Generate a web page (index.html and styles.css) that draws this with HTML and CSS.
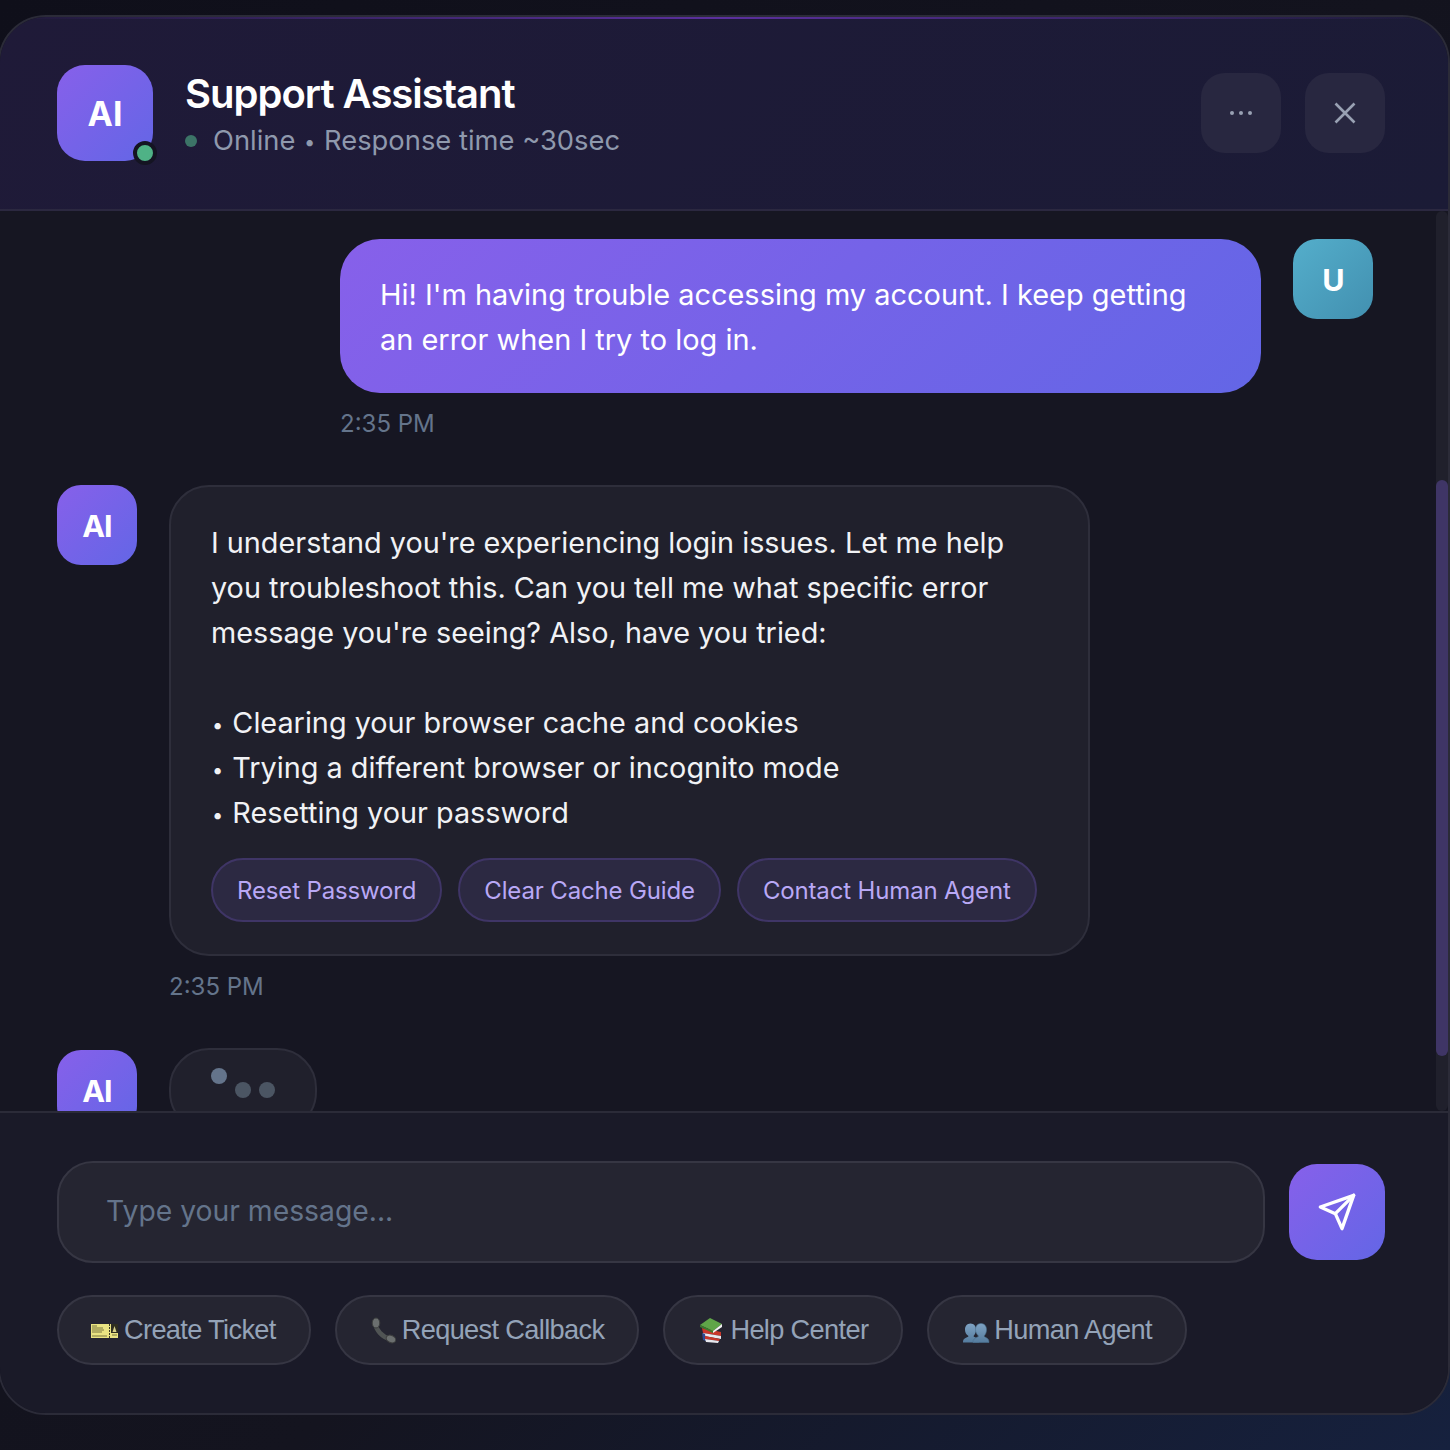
FILE: index.html
```html
<!DOCTYPE html>
<html lang="en">
<head>
<meta charset="utf-8">
<title>Support Assistant</title>
<link rel="stylesheet" href="styles.css">
</head>
<body>
<main class="window">
  <header class="header">
    <div class="header-main">
      <div class="avatar-large">AI<span class="online-badge"></span></div>
      <div class="agent-info">
        <h1 class="agent-name">Support Assistant</h1>
        <div class="agent-status"><span class="status-dot"></span><span>Online <span class="bullet">•</span> Response time ~30sec</span></div>
      </div>
    </div>
    <div class="header-actions">
      <button class="icon-btn" aria-label="More"><svg width="40" height="40" viewBox="0 0 40 40"><circle cx="11" cy="20" r="2"/><circle cx="20" cy="20" r="2"/><circle cx="29" cy="20" r="2"/></svg></button>
      <button class="icon-btn" aria-label="Close"><svg class="stroke" width="40" height="40" viewBox="0 0 40 40"><path d="M10.500 10.500l19 19M29.500 10.500l-19 19"/></svg></button>
    </div>
  </header>
  <section class="messages">
    <div class="msg msg-user">
      <div class="msg-body">
        <div class="bubble bubble-user">Hi! I'm having trouble accessing my account. I keep getting an error when I try to log in.</div>
        <div class="time">2:35 PM</div>
      </div>
      <div class="avatar avatar-user">U</div>
    </div>
    <div class="msg">
      <div class="avatar avatar-ai">AI</div>
      <div class="msg-body">
        <div class="bubble bubble-ai">
          <p class="bubble-text">I understand you're experiencing login issues. Let me help you troubleshoot this. Can you tell me what specific error message you're seeing? Also, have you tried:<br><br><span class="bullet">•</span> Clearing your browser cache and cookies<br><span class="bullet">•</span> Trying a different browser or incognito mode<br><span class="bullet">•</span> Resetting your password</p>
          <div class="chips">
            <button class="chip">Reset Password</button>
            <button class="chip">Clear Cache Guide</button>
            <button class="chip">Contact Human Agent</button>
          </div>
        </div>
        <div class="time">2:35 PM</div>
      </div>
    </div>
    <div class="msg msg-typing">
      <div class="avatar avatar-ai">AI</div>
      <div class="typing"><span class="dot dot-up"></span><span class="dot"></span><span class="dot"></span></div>
    </div>
    <div class="scrollbar"><div class="scroll-thumb"></div></div>
  </section>
  <footer class="composer">
    <div class="input-row">
      <input class="input" type="text" placeholder="Type your message...">
      <button class="send" aria-label="Send"><svg width="40" height="40" viewBox="0 0 24 24" fill="none" stroke="#fff" stroke-width="2" stroke-linecap="round" stroke-linejoin="round"><path d="M22 2L11 13"/><path d="M22 2L15 22L11 13L2 9Z"/></svg></button>
    </div>
    <div class="quick">
      <button class="quick-btn"><svg class="emoji" width="27" height="27" viewBox="0 0 27 27"><rect x="0" y="7" width="27" height="14" fill="#e9e382"/><rect x="20" y="7" width="7" height="9" fill="#2f2e20"/><path d="M21.500 15l2-6 2 6z" fill="#d9d38a"/><path d="M1 9h5M1 11h11M1 13h12M1 15h10M1 19h15M21 18h5" stroke="#7a7740" stroke-width="1"/><path d="M18.500 7v14" stroke="#3a3924" stroke-width="1" stroke-dasharray="2 1"/></svg>Create Ticket</button>
      <button class="quick-btn"><svg class="emoji" width="27" height="27" viewBox="0 0 27 27"><path d="M6 6C7 13 13 20 21 22" fill="none" stroke="#505454" stroke-width="4.500"/><ellipse cx="7" cy="6" rx="3.800" ry="5" fill="#6b6f6f" stroke="#3c3e3e" stroke-width="1"/><ellipse cx="22" cy="22" rx="5" ry="3.600" transform="rotate(25 22 22)" fill="#6b6f6f" stroke="#3c3e3e" stroke-width="1"/></svg>Request Callback</button>
      <button class="quick-btn"><svg class="emoji" width="27" height="27" viewBox="0 0 27 27"><path d="M5 11l19 4v4L6 16z" fill="#c9362b"/><path d="M6 16l18 3v3L7 19z" fill="#e8e8ee"/><path d="M5 16l3 1 1 7-3-1z" fill="#2e4a92"/><path d="M8 19l15 3-1 2-14-2z" fill="#c9362b"/><path d="M8 22l14 2-1 2-12-1z" fill="#e8e8ee"/><path d="M3 8l10-7 12 6-9 7z" fill="#5fa548"/><path d="M3 8l13 6v2L3 10z" fill="#3e7a2e"/><path d="M16 14l9-7v3l-9 6z" fill="#f2f2f2"/></svg>Help Center</button>
      <button class="quick-btn"><svg class="emoji emoji-over" width="27" height="27" viewBox="0 0 27 27"><defs><linearGradient id="bust" x1="0" y1="0" x2="0" y2="1"><stop offset="0" stop-color="#7fa3c4"/><stop offset="1" stop-color="#557c9e"/></linearGradient></defs><path d="M9.500 6.500c3.500 0 5.500 2.800 5.500 6 0 3-1 5-2.500 6.500 0 1 2.500 1.500 4.500 3 .8.700 1 2 1 3.500H2c0-1.500.2-2.800 1-3.500 2-1.500 4.500-2 4.500-3C5 17.500 4 15.500 4 12.500c0-3.200 2-6 5.500-6z" fill="url(#bust)"/><path d="M20 6.500c3.500 0 5.500 2.800 5.500 6 0 3-1 5-2.500 6.500 0 1 2.500 1.500 4 3 .6.700 1 2 1 3.500H12c0-1.500.2-2.800 1-3.500 2-1.500 4.500-2 4.500-3-1.500-1.500-3-3.500-3-6.500 0-3.200 2-6 5.500-6z" fill="url(#bust)" stroke="#49708f" stroke-width=".6"/></svg>Human Agent</button>
    </div>
  </footer>
</main>
</body>
</html>
```
FILE: styles.css
```css
* { box-sizing: border-box; }
html, body { margin: 0; }
body {
  height: 1450px;
  padding-top: 15px;
  background: linear-gradient(135deg, #0f0f1a 0%, #14141f 60%, #16213e 100%);
  font-family: Inter, "Liberation Sans", sans-serif;
  overflow: hidden;
}
.window {
  position: relative;
  width: 1452px;
  height: 1400px;
  margin-left: -2px;
  border: 2px solid #2b2b38;
  border-radius: 48px;
  background: #161622;
  overflow: hidden;
  display: flex;
  flex-direction: column;
}
.window::before {
  content: "";
  position: absolute;
  top: 0;
  left: 0;
  right: 0;
  height: 2px;
  background: linear-gradient(90deg, transparent, #5b2f9e 50%, transparent);
  z-index: 2;
}
.bullet { font-size: 20px; line-height: 0; vertical-align: 1px; }
.header {
  flex: none;
  height: 194px;
  padding: 0 63px 0 57px;
  display: flex;
  align-items: center;
  justify-content: space-between;
  border-bottom: 2px solid #2b2840;
  background: linear-gradient(135deg, #1f1a38 0%, #1b1b36 100%);
}
.header-main { display: flex; align-items: center; gap: 32px; }
.avatar-large {
  position: relative;
  width: 96px;
  height: 96px;
  border-radius: 28px;
  background: linear-gradient(135deg, #8760ea, #6366e6);
  color: #fff;
  font-size: 34px;
  font-weight: 700;
  display: flex;
  align-items: center;
  justify-content: center;
}
.online-badge {
  position: absolute;
  right: -4px;
  bottom: -4px;
  width: 24px;
  height: 24px;
  border-radius: 50%;
  background: #4fb286;
  border: 4px solid #141422;
}
.agent-info { display: flex; flex-direction: column; gap: 2px; padding-top: 6px; }
.agent-name { margin: 0; font-size: 40px; line-height: 48px; font-weight: 600; color: #fff; letter-spacing: -1px; }
.agent-status { display: flex; align-items: center; gap: 16px; font-size: 27.35px; line-height: 42px; color: #8f99ad; }
.agent-status .bullet { margin: 0 1px; }
.status-dot { width: 12px; height: 12px; border-radius: 50%; background: #3c7467; }
.header-actions { display: flex; gap: 24px; }
.icon-btn {
  width: 80px;
  height: 80px;
  padding: 0;
  border: 0;
  border-radius: 24px;
  background: #282740;
  display: flex;
  align-items: center;
  justify-content: center;
}
.icon-btn svg { fill: #99a1b3; }
.icon-btn .stroke { fill: none; stroke: #99a1b3; stroke-width: 2.6; }
.messages {
  position: relative;
  flex: 1;
  min-height: 0;
  overflow: hidden;
  padding: 28px 75px 0 57px;
  display: flex;
  flex-direction: column;
  gap: 46px;
  background: #161622;
}
.msg { display: flex; gap: 32px; align-items: flex-start; flex: none; }
.msg-user { justify-content: flex-end; }
.msg-body { width: 921px; display: flex; flex-direction: column; }
.avatar {
  flex: none;
  width: 80px;
  height: 80px;
  border-radius: 24px;
  color: #fff;
  font-size: 30.5px;
  font-weight: 700;
  letter-spacing: -0.8px;
  display: flex;
  align-items: center;
  justify-content: center;
}
.avatar-ai { background: linear-gradient(135deg, #8760ea, #6366e6); }
.avatar-user { background: linear-gradient(135deg, #54aecb, #4290b0); }
.bubble { font-size: 28.8px; line-height: 45px; }
.bubble-user {
  font-size: 28.95px;
  padding: 33px 40px 31px;
  border-radius: 40px;
  color: #fff;
  background: linear-gradient(135deg, #8760ea, #6366e6);
}
.bubble-ai {
  padding: 33px 40px 32px;
  border: 2px solid #2e2e3b;
  border-radius: 40px;
  color: #f1f2f5;
  background: #20202c;
}
.bubble-text { margin: 0; }
.bubble-text .bullet { margin: 0 1px; }
.chips { display: flex; gap: 16px; margin-top: 23px; }
.chip {
  height: 64px;
  padding: 0 24px;
  border: 2px solid #3f3566;
  border-radius: 32px;
  background: #2c2942;
  color: #b9a8f5;
  font-family: inherit;
  font-size: 24px;
  letter-spacing: -0.15px;
  white-space: nowrap;
}
.time { margin-top: 16px; font-size: 24px; line-height: 30px; color: #64748b; }
.msg-typing { align-items: center; }
.typing {
  display: flex;
  gap: 8px;
  padding: 32px 40px;
  border: 2px solid #2e2e3b;
  border-radius: 40px;
  background: #20202c;
}
.dot { width: 16px; height: 16px; border-radius: 50%; background: #4b5563; }
.dot-up { background: #64748b; transform: translateY(-14px); }
.scrollbar {
  position: absolute;
  top: 0;
  right: 0;
  bottom: 0;
  width: 12px;
  background: #20202c;
  border-radius: 6px;
}
.scroll-thumb {
  height: 576px;
  margin-top: 269px;
  border-radius: 6px;
  background: #3f3566;
}
.composer {
  flex: none;
  height: 302px;
  padding: 48px 63px 0 57px;
  border-top: 2px solid #2b2b38;
  background: #1a1a28;
}
.input-row { display: flex; align-items: center; gap: 24px; }
.input {
  flex: 1;
  min-width: 0;
  height: 102px;
  padding: 0 47px 2px;
  border: 2px solid #363643;
  border-radius: 36px;
  background: #252531;
  color: #fff;
  font-family: inherit;
  font-size: 28.3px;
  outline: none;
}
.input::placeholder { color: #64748b; opacity: 1; }
.send {
  flex: none;
  width: 96px;
  height: 96px;
  padding: 0;
  border: 0;
  border-radius: 28px;
  background: linear-gradient(135deg, #8760ea, #6366e6);
  display: flex;
  align-items: center;
  justify-content: center;
}
.quick { display: flex; gap: 24px; margin-top: 32px; }
.quick-btn {
  height: 70px;
  padding: 0 33px 0 32px;
  border: 2px solid #363643;
  border-radius: 35px;
  background: #252531;
  color: #94a3b8;
  font-family: "Liberation Sans", Arial, sans-serif;
  font-size: 27.2px;
  letter-spacing: -0.65px;
  white-space: nowrap;
  display: flex;
  align-items: center;
  gap: 6px;
}
.emoji { flex: none; }
.emoji-over { overflow: visible; }
```
